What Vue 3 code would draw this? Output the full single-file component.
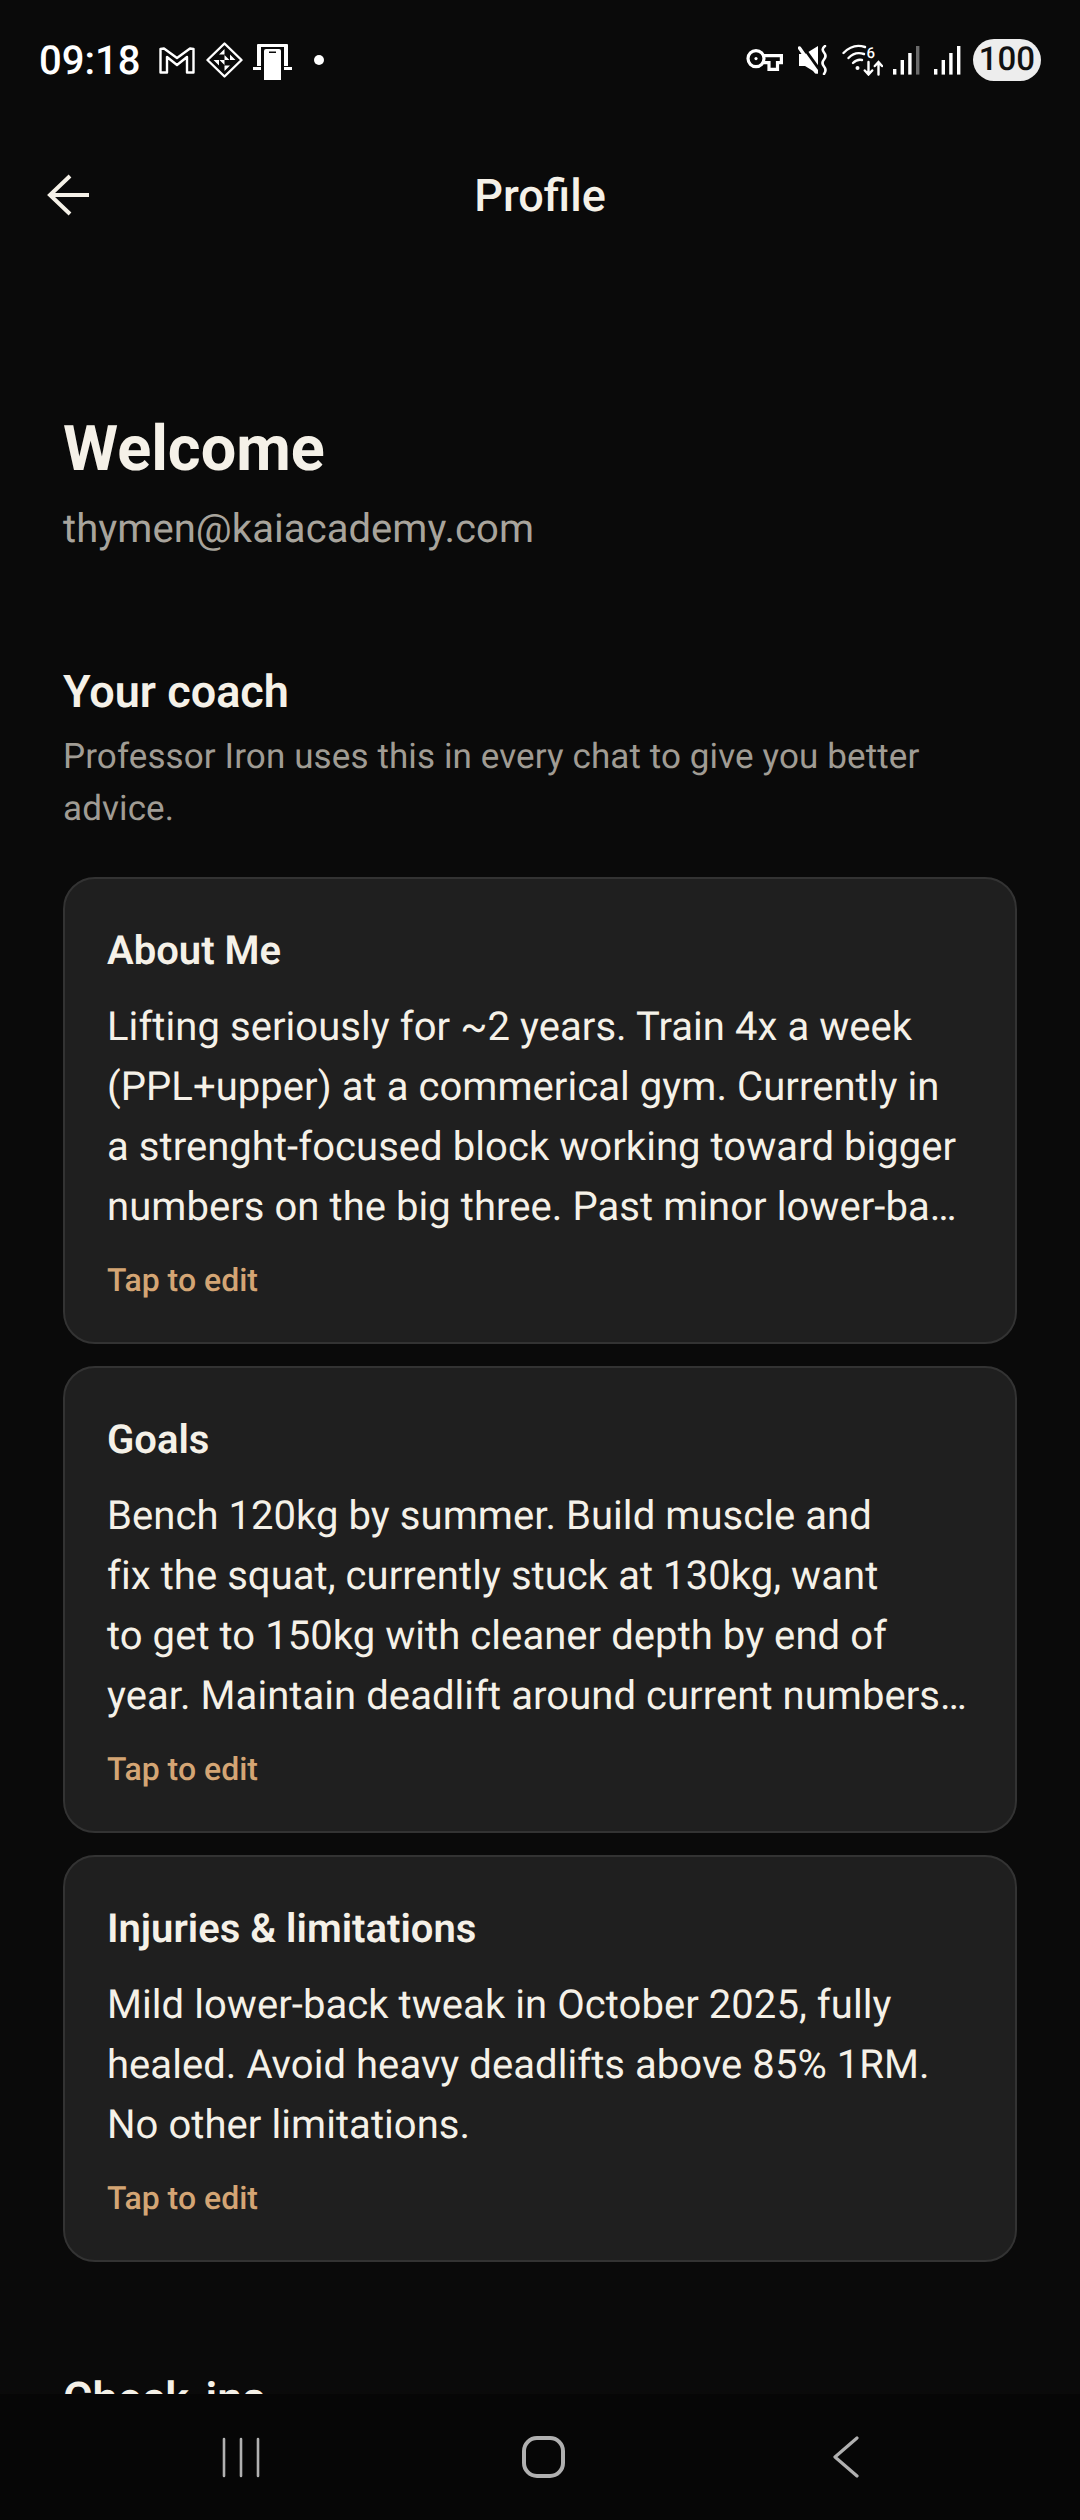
<script setup>
const cards = [
  {
    title: 'About Me',
    lines: [
      'Lifting seriously for ~2 years. Train 4x a week',
      '(PPL+upper) at a commerical gym. Currently in',
      'a strenght-focused block working toward bigger',
      'numbers on the big three. Past minor lower-ba…'
    ]
  },
  {
    title: 'Goals',
    lines: [
      'Bench 120kg by summer. Build muscle and',
      'fix the squat, currently stuck at 130kg, want',
      'to get to 150kg with cleaner depth by end of',
      'year. Maintain deadlift around current numbers…'
    ]
  },
  {
    title: 'Injuries & limitations',
    lines: [
      'Mild lower-back tweak in October 2025, fully',
      'healed. Avoid heavy deadlifts above 85% 1RM.',
      'No other limitations.'
    ]
  }
]
</script>

<template>
  <div class="screen">
    <div class="status-bar">
      <div class="status-left">
        <span class="clock">09:18</span>
        <svg class="ic-gmail" width="36" height="27" viewBox="0 0 36 27" fill="none" stroke="#fff" stroke-width="2.4" stroke-linejoin="round">
          <path d="M1.5 2 L5 1.5 L18 11 L31 1.5 L34.5 2 V25.5 H28 V10 L18 18 L8 10 V25.5 H1.5 Z" />
        </svg>
        <svg class="ic-diamond" width="37" height="36" viewBox="0 0 37 36" fill="none">
          <path d="M18.5 1.5 L35.5 18 L18.5 34.5 L1.5 18 Z" stroke="#fff" stroke-width="2.4" stroke-linejoin="round" />
          <path d="M18.5 7 L13 12.5 H18.5 Z M29.5 18 L24 12.5 V18 Z M18.5 29 L24 23.5 H18.5 Z M7.5 18 L13 23.5 V18 Z M18.5 13 L23.5 18 H18.5 Z M18.5 23 L13.5 18 H18.5 Z" fill="#fff" />
        </svg>
        <svg class="ic-device" width="39" height="36" viewBox="0 0 39 36">
          <path d="M4 1 Q4 0 5 0 H34 Q35 0 35 1 V22 H4 Z" fill="#fff" />
          <path d="M0 23 H9 V26 H0 Z M30 23 H39 V26 H30 Z" fill="#fff" />
          <path d="M8 3 H31 V36 H8 Z" fill="#0a0a0a" />
          <path d="M11 7 Q11 5 13 5 H26 Q28 5 28 7 V36 H11 Z" fill="#fff" />
          <path d="M16 7.5 H23 V9 H16 Z" fill="#0a0a0a" />
        </svg>
        <span class="dot"></span>
      </div>
      <div class="status-right">
        <svg class="ic-key" width="37" height="22" viewBox="0 0 37 22" fill="none" stroke="#fff" stroke-width="3.2">
          <circle cx="10" cy="9.6" r="8" />
          <path d="M18 6.6 H35.4 V13.6 H31.5 V20.4 H23 V13.6 H17" />
          <circle cx="10" cy="9.6" r="1.6" fill="#fff" stroke="none" />
        </svg>
        <svg class="ic-mute" width="30" height="30" viewBox="0 0 30 30" fill="none">
          <path d="M1 9 H7 L20 1 V29 L7 21 H1 Z" fill="#fff" />
          <path d="M4.5 1 L21 24" stroke="#0a0a0a" stroke-width="3" />
          <path d="M1.5 3 L18 27" stroke="#fff" stroke-width="3.4" stroke-linecap="round" />
          <path d="M27 1 Q23 4 26 7.5 Q29 11 26 14.5 Q23 18 26 21.5 Q29 25 26 29" stroke="#fff" stroke-width="2.6" stroke-linecap="round" />
        </svg>
        <svg class="ic-wifi" width="41" height="32" viewBox="0 0 41 32" fill="none" stroke="#fff" stroke-linecap="round">
          <path d="M1.5 9 Q11 -1 23 3" stroke-width="2.4" />
          <path d="M6.5 14 Q13 7 22 10" stroke-width="2.4" />
          <path d="M11 19 Q15 15 20 16" stroke-width="2.4" />
          <circle cx="15.5" cy="24" r="2" fill="#fff" stroke="none" />
          <text x="24.5" y="14" fill="#fff" stroke="none" font-size="15" font-family="Roboto, sans-serif" font-weight="500">6</text>
          <path d="M26.5 18 V30 M22.8 26.5 L26.5 30.5 L30.2 26.5 M36.5 30.5 V18.5 M32.8 22 L36.5 18 L40 22" stroke-width="2.4" />
        </svg>
        <svg class="ic-signal" width="27" height="29" viewBox="0 0 27 29" fill="#fff">
          <rect x="0" y="23" width="3.4" height="5.6" />
          <rect x="7.6" y="14" width="3.4" height="14.6" />
          <rect x="15.2" y="7" width="3.4" height="21.6" />
          <rect x="23" y="0" width="3.4" height="28.6" fill="#6b6b6b" />
        </svg>
        <svg class="ic-signal signal-full" width="27" height="29" viewBox="0 0 27 29" fill="#fff">
          <rect x="0" y="23" width="3.4" height="5.6" />
          <rect x="7.6" y="14" width="3.4" height="14.6" />
          <rect x="15.2" y="7" width="3.4" height="21.6" />
          <rect x="23" y="0" width="3.4" height="28.6" />
        </svg>
        <span class="battery">100</span>
      </div>
    </div>

    <header class="app-bar">
      <svg class="back" width="44" height="44" viewBox="0 0 44 44" fill="none" stroke="#f5f1e8" stroke-width="4">
        <path d="M4 22 H43" />
        <path d="M24 3 L4 22 L24 41" />
      </svg>
      <span class="app-title">Profile</span>
    </header>

    <main class="content">
      <h1 class="welcome">Welcome</h1>
      <p class="email">thymen@kaiacademy.com</p>

      <h2 class="section-title">Your coach</h2>
      <p class="section-sub">Professor Iron uses this in every chat to give you better<br />advice.</p>

      <div class="cards">
        <div class="card" v-for="card in cards" :key="card.title">
          <div class="card-title">{{ card.title }}</div>
          <div class="card-body">
            <div v-for="line in card.lines" :key="line">{{ line }}</div>
          </div>
          <div class="card-hint">Tap to edit</div>
        </div>
      </div>

      <h2 class="section-title checkins">Check-ins</h2>
    </main>

    <nav class="nav-bar">
      <svg width="44" height="42" viewBox="0 0 44 42" fill="none" stroke="#b0b0b0" stroke-width="2.6" stroke-linecap="round">
        <path d="M4 3 V40 M21 3 V40 M38 3 V40" />
      </svg>
      <svg class="nav-home" width="43" height="42" viewBox="0 0 43 42" fill="none" stroke="#b0b0b0" stroke-width="4">
        <rect x="2" y="2" width="39" height="38" rx="13" />
      </svg>
      <svg class="nav-back" width="26" height="42" viewBox="0 0 26 42" fill="none" stroke="#b0b0b0" stroke-width="3.2" stroke-linecap="round" stroke-linejoin="round">
        <path d="M24 2 L2 21 L24 40" />
      </svg>
    </nav>
  </div>
</template>

<style>
html, body {
  margin: 0;
  background: #0a0a0a;
}
</style>

<style scoped>
.screen {
  position: relative;
  width: 1080px;
  height: 2520px;
  display: flex;
  flex-direction: column;
  overflow: hidden;
  background: #0a0a0a;
  color: #f5f1e8;
  font-family: Roboto, "Noto Sans", sans-serif;
  text-rendering: geometricPrecision;
}

.status-bar {
  height: 120px;
  flex: none;
  display: flex;
  justify-content: space-between;
  align-items: center;
  padding: 0 39px;
  box-sizing: border-box;
  color: #fff;
}

.status-left,
.status-right {
  display: flex;
  align-items: center;
}

.clock {
  font-size: 40px;
  font-weight: 500;
  margin-right: 19px;
}

.ic-diamond {
  margin-left: 11px;
}

.ic-device {
  margin-left: 10px;
  margin-top: 4px;
}

.dot {
  width: 10px;
  height: 10px;
  border-radius: 50%;
  background: #fff;
  margin-left: 22px;
}

.ic-mute {
  margin-left: 15px;
}

.ic-wifi {
  margin-left: 14px;
}

.ic-signal {
  margin-left: 10px;
}

.signal-full {
  margin-left: 14px;
}

.battery {
  margin-left: 12px;
  width: 68px;
  height: 42px;
  border-radius: 21px;
  background: #ededed;
  color: #111;
  font-size: 33px;
  font-weight: 500;
  line-height: 42px;
  text-align: center;
}

.app-bar {
  flex: none;
  height: 150px;
  position: relative;
  display: flex;
  align-items: center;
  justify-content: center;
}

.back {
  position: absolute;
  left: 46px;
  top: 53px;
}

.app-title {
  font-size: 45px;
  font-weight: 500;
}

.content {
  flex: 1;
  min-height: 0;
  padding: 144px 63px 0;
}

.welcome {
  margin: 0;
  font-size: 63px;
  font-weight: 700;
  line-height: 72px;
}

.email {
  margin: 17px 0 0;
  font-size: 40px;
  line-height: 52px;
  letter-spacing: 0.07px;
  color: #a8a49c;
}

.section-title {
  margin: 110px 0 0;
  font-size: 45px;
  font-weight: 600;
  line-height: 54px;
}

.section-sub {
  margin: 12px 0 0;
  font-size: 35px;
  line-height: 52px;
  letter-spacing: 0.11px;
  color: #a09c94;
}

.cards {
  margin-top: 42px;
  display: flex;
  flex-direction: column;
  gap: 22px;
}

.card {
  box-sizing: border-box;
  padding: 48px 42px 40px;
  background: #1f1f1f;
  border: 2px solid #333;
  border-radius: 32px;
}

.card-title {
  font-size: 40px;
  font-weight: 600;
  line-height: 48px;
}

.card-body {
  margin-top: 22px;
  font-size: 40px;
  line-height: 60px;
  letter-spacing: 0.06px;
  white-space: nowrap;
}

.card-hint {
  margin-top: 21px;
  font-size: 32px;
  font-weight: 500;
  line-height: 44px;
  color: #d4a574;
}

.checkins {
  margin-top: 110px;
}

.nav-bar {
  position: absolute;
  left: 0;
  top: 2394px;
  width: 1080px;
  height: 126px;
  background: #060606;
  display: flex;
  align-items: center;
  padding: 0 0 0 220px;
  box-sizing: border-box;
}

.nav-home {
  margin-left: 258px;
}

.nav-back {
  margin-left: 268px;
}
</style>
